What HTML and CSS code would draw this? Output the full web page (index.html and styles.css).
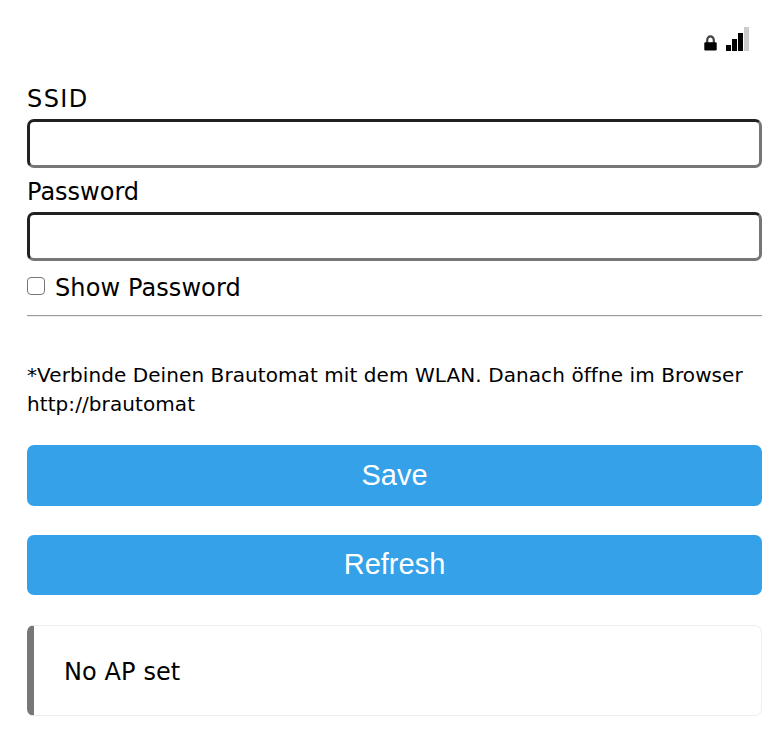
FILE: index.html
```html
<!DOCTYPE html>
<html lang="de">
<head>
<meta charset="utf-8">
<title>WLAN</title>
<link rel="stylesheet" href="styles.css">
</head>
<body>
<main class="wrap">
  <div class="status">
    <svg class="lock" viewBox="0 0 13 16"><path d="M3.2 8V5a3.3 3.6 0 0 1 6.6 0V8" fill="none" stroke="#444" stroke-width="2.2"/><rect x="0.3" y="7.2" width="12.4" height="8.3" rx="1.2" fill="#000"/></svg>
    <svg class="signal" viewBox="0 0 23 24"><path d="M0 18h5v6H0zM6 12h5v12H6zM12 6h5v18h-5z" fill="#000"/><path d="M18 0h5v24h-5z" fill="#ccc"/></svg>
  </div>
  <form>
    <label class="label ssid" for="s">SSID</label>
    <input class="field" id="s" type="text">
    <label class="label" for="p">Password</label>
    <input class="field" id="p" type="password">
    <div class="show"><input class="check" id="c" type="checkbox"><label for="c">Show Password</label></div>
    <hr class="rule">
    <p class="note">*Verbinde Deinen Brautomat mit dem WLAN. Danach öffne im Browser http://brautomat</p>
    <button class="btn" type="button">Save</button>
    <button class="btn refresh" type="button">Refresh</button>
  </form>
  <div class="msg">No AP set</div>
</main>
</body>
</html>
```
FILE: styles.css
```css
* { box-sizing: border-box; }
body { margin: 0; background: #fff; color: #000; font-family: "DejaVu Sans", Verdana, sans-serif; font-size: 24px; }
.wrap { width: 735px; margin-left: 27px; padding-top: 27px; }
.status { display: flex; justify-content: flex-end; align-items: flex-end; height: 24px; gap: 9px; padding-right: 13px; }
.lock { width: 13px; height: 16px; }
.signal { width: 23px; height: 24px; }
form { padding-top: 32px; }
.label { display: block; height: 36px; line-height: 32px; font-size: 24px; }
.ssid { letter-spacing: 1.4px; }
.field { display: block; width: 100%; height: 49px; margin: 0 0 8px; padding: 8px; border: 3px inset #767676; border-radius: 7px; background: #fff; }
.show { display: flex; align-items: center; height: 38px; margin-bottom: 8px; font-size: 24px; letter-spacing: 0.1px; }
.check { appearance: none; width: 18px; height: 18px; margin: 0 10px 5px 0; border: 1px solid #767676; border-radius: 4px; background: #fff; }
.rule { height: 2px; margin: 0; border: 0; border-top: 1px solid #999; border-bottom: 1px solid #eee; }
.note { margin: 44px 0 26px; font-size: 20px; line-height: 29px; letter-spacing: 0.08px; }
.btn { display: block; width: 100%; height: 61px; padding: 0; border: 0; border-radius: 7px; background: #34a1e9; color: #fff; font: 29px "Liberation Sans", Arial, sans-serif; }
.refresh { height: 60px; margin-top: 29px; padding-bottom: 2px; }
.msg { height: 91px; margin-top: 30px; padding-left: 30px; border: 1px solid #eee; border-left: 7px solid #777; border-radius: 7px; line-height: 93px; font-size: 24px; letter-spacing: 0.1px; }
```
